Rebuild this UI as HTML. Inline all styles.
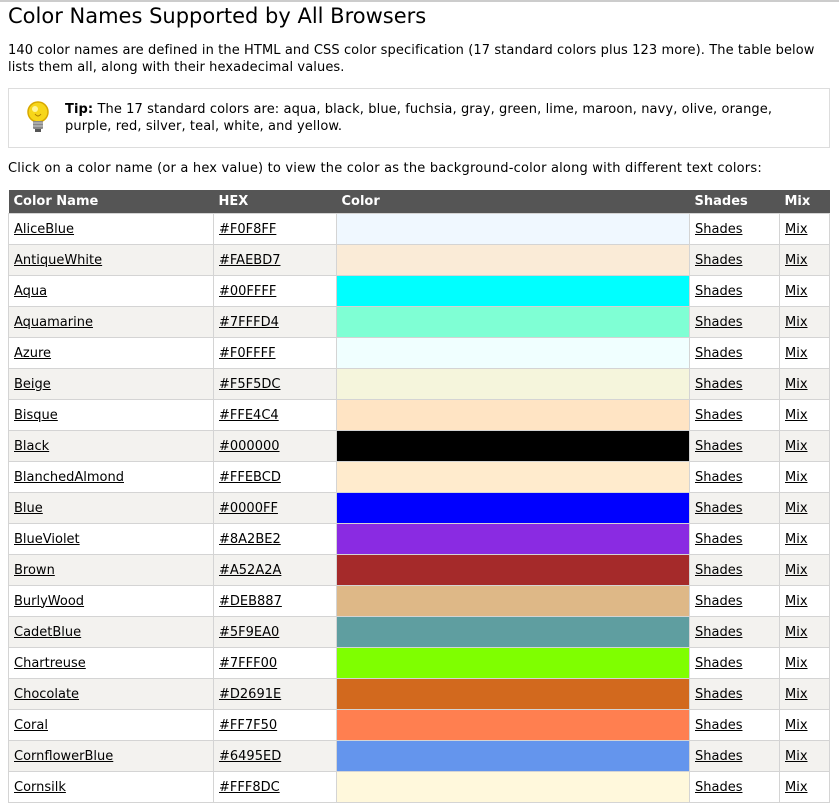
<!DOCTYPE html>
<html><head><meta charset="utf-8"><style>
body{margin:0;font-family:"DejaVu Sans","Liberation Sans",sans-serif;font-size:13px;color:#000;background:#fff;width:839px;height:769px;overflow:hidden;position:relative;border-top:2px solid #ccc;box-sizing:border-box}
h1{position:absolute;left:8px;top:2px;margin:0;font-weight:normal;font-size:21px;white-space:nowrap}
.p1{position:absolute;left:8px;top:40px;width:815px;line-height:17px;margin:0;letter-spacing:0.1px}
.tip{position:absolute;left:8px;top:86px;width:822px;height:60px;border:1px solid #ddd;box-sizing:border-box}
.tip .t{position:absolute;left:56px;top:12px;line-height:17px;width:720px;letter-spacing:0.1px}
.p2{position:absolute;left:8px;top:159px;margin:0;white-space:nowrap;letter-spacing:0.2px}
table{position:absolute;left:8px;top:188px;border-collapse:collapse;width:822px}
th{background:#555;color:#fff;text-align:left;height:23px;padding:0 5px;font-size:13px;border:none}
td{height:31px;padding:0 5px;border:1px solid #d4d4d4;box-sizing:border-box}
tr:nth-child(odd) td{background:#f3f2ef}
td u{text-decoration:underline}
td.c{padding:0}
</style></head><body>
<h1>Color Names Supported by All Browsers</h1>
<p class="p1">140 color names are defined in the HTML and CSS color specification (17 standard colors plus 123 more). The table below lists them all, along with their hexadecimal values.</p>
<div class="tip">
<svg style="position:absolute;left:16px;top:11px" width="26" height="34" viewBox="0 0 26 34"><circle cx="13" cy="12" r="10" fill="#f7d61a" stroke="#d8a800" stroke-width="1.5"/><circle cx="10" cy="9" r="3" fill="#fff59a"/><path d="M10 14 q3 4 6 0" stroke="#b08000" fill="none"/><rect x="8" y="21" width="10" height="8" rx="1" fill="#888"/><path d="M8 23h10M8 26h10" stroke="#ccc"/><rect x="10" y="29" width="6" height="3" fill="#555"/></svg>
<div class="t"><b>Tip:</b> The 17 standard colors are: aqua, black, blue, fuchsia, gray, green, lime, maroon, navy, olive, orange, purple, red, silver, teal, white, and yellow.</div>
</div>
<p class="p2">Click on a color name (or a hex value) to view the color as the background-color along with different text colors:</p>
<table>
<tr><th style="width:195px">Color Name</th><th style="width:113px">HEX</th><th style="width:343px">Color</th><th style="width:80px">Shades</th><th>Mix</th></tr>
<tr><td><u>AliceBlue</u></td><td><u>#F0F8FF</u></td><td class="c" style="background:#F0F8FF"></td><td><u>Shades</u></td><td><u>Mix</u></td></tr>
<tr><td><u>AntiqueWhite</u></td><td><u>#FAEBD7</u></td><td class="c" style="background:#FAEBD7"></td><td><u>Shades</u></td><td><u>Mix</u></td></tr>
<tr><td><u>Aqua</u></td><td><u>#00FFFF</u></td><td class="c" style="background:#00FFFF"></td><td><u>Shades</u></td><td><u>Mix</u></td></tr>
<tr><td><u>Aquamarine</u></td><td><u>#7FFFD4</u></td><td class="c" style="background:#7FFFD4"></td><td><u>Shades</u></td><td><u>Mix</u></td></tr>
<tr><td><u>Azure</u></td><td><u>#F0FFFF</u></td><td class="c" style="background:#F0FFFF"></td><td><u>Shades</u></td><td><u>Mix</u></td></tr>
<tr><td><u>Beige</u></td><td><u>#F5F5DC</u></td><td class="c" style="background:#F5F5DC"></td><td><u>Shades</u></td><td><u>Mix</u></td></tr>
<tr><td><u>Bisque</u></td><td><u>#FFE4C4</u></td><td class="c" style="background:#FFE4C4"></td><td><u>Shades</u></td><td><u>Mix</u></td></tr>
<tr><td><u>Black</u></td><td><u>#000000</u></td><td class="c" style="background:#000000"></td><td><u>Shades</u></td><td><u>Mix</u></td></tr>
<tr><td><u>BlanchedAlmond</u></td><td><u>#FFEBCD</u></td><td class="c" style="background:#FFEBCD"></td><td><u>Shades</u></td><td><u>Mix</u></td></tr>
<tr><td><u>Blue</u></td><td><u>#0000FF</u></td><td class="c" style="background:#0000FF"></td><td><u>Shades</u></td><td><u>Mix</u></td></tr>
<tr><td><u>BlueViolet</u></td><td><u>#8A2BE2</u></td><td class="c" style="background:#8A2BE2"></td><td><u>Shades</u></td><td><u>Mix</u></td></tr>
<tr><td><u>Brown</u></td><td><u>#A52A2A</u></td><td class="c" style="background:#A52A2A"></td><td><u>Shades</u></td><td><u>Mix</u></td></tr>
<tr><td><u>BurlyWood</u></td><td><u>#DEB887</u></td><td class="c" style="background:#DEB887"></td><td><u>Shades</u></td><td><u>Mix</u></td></tr>
<tr><td><u>CadetBlue</u></td><td><u>#5F9EA0</u></td><td class="c" style="background:#5F9EA0"></td><td><u>Shades</u></td><td><u>Mix</u></td></tr>
<tr><td><u>Chartreuse</u></td><td><u>#7FFF00</u></td><td class="c" style="background:#7FFF00"></td><td><u>Shades</u></td><td><u>Mix</u></td></tr>
<tr><td><u>Chocolate</u></td><td><u>#D2691E</u></td><td class="c" style="background:#D2691E"></td><td><u>Shades</u></td><td><u>Mix</u></td></tr>
<tr><td><u>Coral</u></td><td><u>#FF7F50</u></td><td class="c" style="background:#FF7F50"></td><td><u>Shades</u></td><td><u>Mix</u></td></tr>
<tr><td><u>CornflowerBlue</u></td><td><u>#6495ED</u></td><td class="c" style="background:#6495ED"></td><td><u>Shades</u></td><td><u>Mix</u></td></tr>
<tr><td><u>Cornsilk</u></td><td><u>#FFF8DC</u></td><td class="c" style="background:#FFF8DC"></td><td><u>Shades</u></td><td><u>Mix</u></td></tr>
</table>
</body></html>
